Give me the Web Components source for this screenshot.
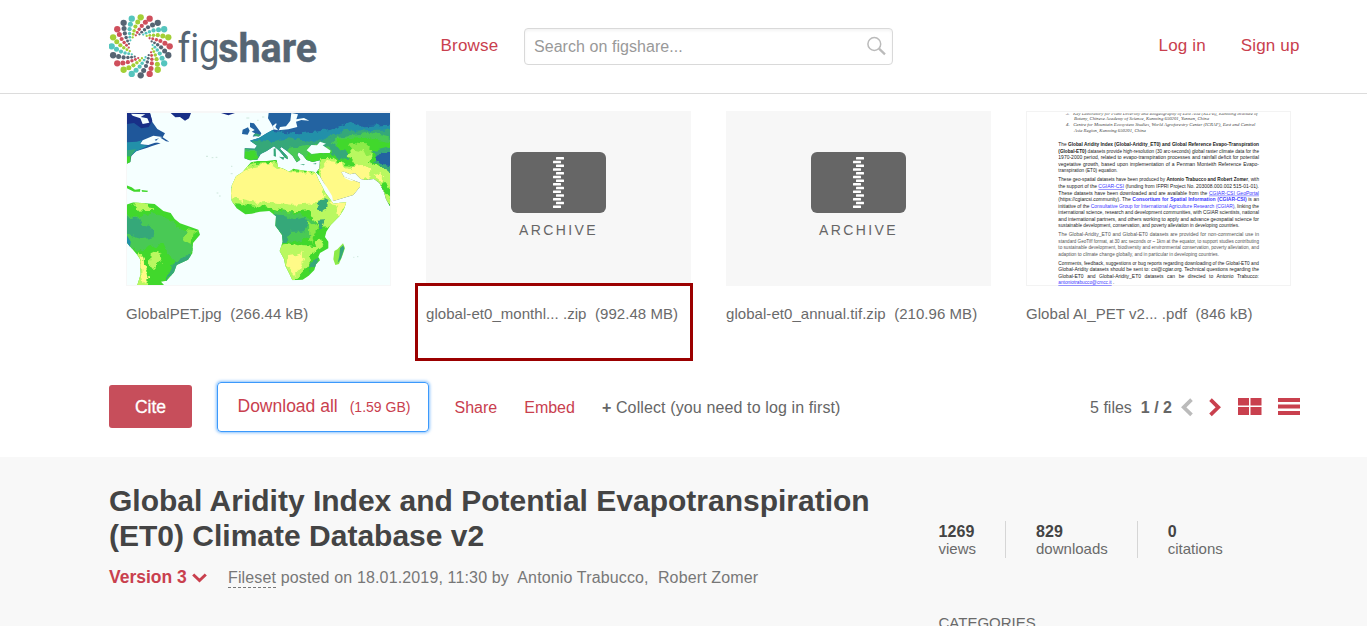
<!DOCTYPE html>
<html lang="en">
<head>
<meta charset="utf-8">
<title>Global Aridity Index - figshare</title>
<style>
body{margin:0;background:#fff;font-family:"Liberation Sans",Arial,sans-serif;color:#6a6a6a;height:626px;overflow:hidden}
</style>
</head>
<body>
<fs-page></fs-page>
<script>
const define = (name, html, after) => {
  const t = document.createElement('template');
  t.innerHTML = html;
  customElements.define(name, class extends HTMLElement {
    constructor() {
      super();
      this.attachShadow({mode: 'open'}).append(t.content.cloneNode(true));
    }
    connectedCallback() { if (after) after(this, this.shadowRoot); }
  });
};

/* Logo: twenty spiral arms of shrinking dots around a hollow centre */
define('fs-logo', `<style>:host{display:block;width:210px;height:66px}svg{display:block}text{font-variant-ligatures:none}</style>
<svg width="210" height="66" viewBox="0 0 210 66"><g id="dots"></g>
<text x="68.5" y="48.7" font-family="Roboto,sans-serif" font-size="41.5" font-weight="400" fill="#566573" textLength="42" lengthAdjust="spacingAndGlyphs">fig</text>
<text x="109.2" y="48.7" font-family="Roboto,sans-serif" font-size="41.5" font-weight="700" fill="#566573" stroke="#566573" stroke-width=".4" textLength="99" lengthAdjust="spacingAndGlyphs">share</text></svg>`,
(h, r) => {
  const c = ['#a3cf36','#cf4f5c','#566573','#55c5be'];
  const radii = [29,24.4,20.4,17,14.2,12], size = [3.15,2.5,2.1,1.75,1.45,1.15], twist = [0,7,15,23,32,42];
  let s = '';
  for (let i = 0; i < 20; i++) radii.forEach((q, k) => {
    const a = (i * 18 - 90 - twist[k]) * Math.PI / 180;
    s += `<circle cx="${(31.7 + q*Math.cos(a)).toFixed(2)}" cy="${(33.3 + q*Math.sin(a)).toFixed(2)}" r="${size[k]}" fill="${c[i%4]}"/>`;
  });
  r.getElementById('dots').innerHTML = s;
});

define('fs-search', `<style>:host{display:flex;box-sizing:border-box;width:369px;height:37px;border:1px solid #d9d9d9;border-radius:4px;align-items:center;justify-content:space-between;padding:0 5px 0 9px;box-shadow:inset 0 2px 3px #0000000c;font-size:16px;letter-spacing:.05px;color:#999}svg{margin-top:-2px}</style>
<slot></slot><svg width="21" height="20" viewBox="0 0 21 20" fill="none" stroke="#bbb"><circle cx="8.3" cy="8" r="6.4" stroke-width="1.5"/><path d="M13 12.7l6 5.6" stroke-width="2.3"/></svg>`);

define('fs-header', `<style>:host{display:flex;box-sizing:border-box;height:94px;border-bottom:1px solid #dcdcdc;padding:0 67px 0 109px;align-items:flex-start;font-size:17px;color:#c9404e}
fs-logo{margin-top:13px}.b{margin:36px 0 0 121.5px;width:58px;letter-spacing:.2px;line-height:19px}fs-search{margin:28px 0 0 25.5px}.r{margin:36px .5px 0 auto;display:flex;gap:35px;line-height:19px;letter-spacing:.15px}</style>
<fs-logo></fs-logo><span class="b">Browse</span><fs-search>Search on figshare...</fs-search><span class="r"><span>Log in</span><span>Sign up</span></span>`);

define('fs-file', `<style>:host{display:block;width:265px}.t{height:175px;display:flex;background:#f7f7f7}.n{margin-top:19px;line-height:18px;font-size:15px;white-space:pre;letter-spacing:.05px}</style>
<div class="t"><slot name="thumb"></slot></div><div class="n"><slot></slot></div>`);

define('fs-archive', `<style>:host{display:flex;flex-direction:column;align-items:center;width:265px;padding-top:41px;font-size:14px}svg{display:block}span{letter-spacing:2.4px;margin:8.500px 0 0 0;line-height:17px;color:#666}</style>
<svg width="95" height="61" viewBox="0 0 95 61"><rect width="95" height="61" rx="6" fill="#666"/><g id="z" fill="#fff"></g></svg><span>ARCHIVE</span>`,
(h, r) => {
  let s = '';
  for (let i = 0; i < 14; i++) s += `<rect x="${i%2 ? 42 : 45}" y="${(5 + i*3.73).toFixed(2)}" width="8" height="2.5" rx=".5"/>`;
  r.getElementById('z').innerHTML = s;
});

/* Evapotranspiration map: colour bands clipped to the coastlines */
define('fs-map', `<style>:host{display:block;padding:2px 1px 1px}svg{display:block}</style>
<svg width="263" height="172" viewBox="21 24 789 516" preserveAspectRatio="none">
<defs>
<clipPath id="af"><path d="M393 172L412 168L440 168L470 164L474 186L492 192L507 200L520 191L545 196L582 200L588 206L596 225L606 243L615 262L630 282L640 296L660 293L679 292L672 312L658 334L632 360L619 380L615 396L625 410L625 430L600 444L595 456L600 466L588 478L583 495L566 512L548 524L517 526L510 510L496 482L492 462L479 438L488 410L486 390L466 362L468 334L448 318L420 320L395 326L376 328L350 310L335 288L333 265L335 242L348 214L367 202Z"/></clipPath>
<clipPath id="eu"><path d="M446 24L810 24L810 304L798 283L792 262L778 234L762 222L735 225L722 222L705 205L690 208L672 200L664 201L672 215L690 222L700 226L720 233L720 245L700 270L640 288L628 270L612 235L598 211L588 204L598 190L600 166L578 171L560 165L548 150L536 142L532 150L541 164L530 172L518 153L502 139L484 126L480 131L502 154L504 163L495 158L478 137L462 124L440 138L422 147L412 164L390 166L373 160L374 130L404 131L411 122L390 107L418 98L440 85L462 73L456 60L444 40Z"/></clipPath>
<clipPath id="sa"><path d="M20 299L40 292L65 294L104 297L130 318L152 324L164 342L180 355L212 366L235 374L240 389L219 414L217 445L204 464L170 480L162 502L140 527L123 530L132 540L52 540L62 508L60 462L52 450L20 412Z"/></clipPath>
<filter id="rough" x="-5%" y="-5%" width="110%" height="110%" color-interpolation-filters="sRGB"><feTurbulence type="fractalNoise" baseFrequency=".05" numOctaves="3" seed="4" result="n"/><feDisplacementMap in="SourceGraphic" in2="n" scale="22" xChannelSelector="R" yChannelSelector="G"/></filter>
</defs>
<rect x="20" y="20" width="800" height="530" fill="#f5ffff"/>
<path fill="#1f579a" d="M20 24H90L97 51L112 72L135 85L128 97L148 110L138 109L119 97L104 112L122 115L94 124L82 128L48 139L34 153L31 171L20 176Z"/>
<path fill="#182f87" d="M20 24H90L97 48L86 66L64 70L42 54L20 57ZM152 24H213L207 40L195 47L180 36L166 37ZM303 24H345L325 31Z"/>
<path fill="#f5ffff" d="M33 26L76 28L62 36L82 40L88 53L68 57L61 40L38 32ZM68 106L100 92L127 96L104 104L112 111L85 120L60 118Z"/>
<path fill="#2290a9" d="M20 112L50 110L66 106L60 118L84 122L50 138L34 151L20 154Z"/><path fill="#35a879" d="M20 136L48 133L34 152L20 158Z"/><path fill="#41d82c" d="M20 155L32 153L31 171L20 177Z"/>
<g clip-path="url(#eu)"><rect x="360" y="20" width="460" height="300" fill="#2363a1"/><g filter="url(#rough)">
<path fill="#2290a9" d="M360 100L450 77L540 85L630 75L690 51L730 64L840 57V330H360Z"/>
<path fill="#35a879" d="M360 125L410 105L450 109L510 100L590 110L670 78L840 72V330H360Z"/>
<path fill="#49c955" d="M360 132L410 135L415 170H360ZM500 130L560 120L630 128L650 95L750 83L840 105V330H510Z"/>
<path fill="#41d82c" d="M364 142L406 137L412 166H364ZM556 148L626 141L648 126L652 104L740 98L840 118V330H540Z"/>
<path fill="#35a879" d="M632 110L654 132L690 142L686 165L653 161L632 141Z"/>
<path fill="#b9f860" d="M600 160L640 158L675 181L708 184L686 150L708 122L737 125L756 150L747 170L782 190L840 198V290L680 300H580Z"/>
<path fill="#8ceb48" d="M684 118L704 112L740 118L760 140L748 152L726 140L700 134Z"/>
<path fill="#fffa87" d="M606 190L622 169L653 170L678 190L731 214L734 290H590ZM690 182L725 180L750 190L752 218L710 222L695 202ZM762 207L786 202L785 232L770 224Z"/>
<path fill="#35a879" d="M752 140L840 120V206L786 190L760 172L778 160Z"/>
<path fill="#2363a1" d="M772 148L840 140V190L794 180L772 165Z"/>
<path fill="#41d82c" d="M791 225L830 270V306L788 260Z"/></g>
<path fill="#f5ffff" d="M560 136L574 120L591 121L600 110L618 116L608 121L632 137L629 144L600 144L575 147ZM460 73L475 76L505 73L532 66L528 50L544 45L568 47L552 39L529 43L534 28L514 24L511 47L498 64L480 66L468 55L454 66ZM664 201L674 200L689 217L706 224L694 228L675 220Z"/></g>
<path fill="#f5ffff" d="M584 206L590 203L604 224L620 246L636 272L640 290L632 280L614 258L600 236Z"/>
<path fill="#2363a1" d="M390 53L402 55L412 68L424 85L421 91L398 95L405 85L395 80L404 75L390 66ZM368 74L384 67L389 77L383 89L366 87ZM471 55L482 61L476 77L466 66Z"/><path fill="#35a879" d="M398 91L408 85L423 90L416 95ZM461 131L467 130L468 155L461 153ZM477 155L493 157L490 165ZM540 178L555 178L551 181ZM578 177L589 174L588 178Z"/>
<g clip-path="url(#af)"><rect x="320" y="150" width="370" height="390" fill="#41d82c"/><g filter="url(#rough)">
<path fill="#b9f860" d="M375 185L400 178L475 172L510 195L600 203L700 300L625 373L602 350L595 365L582 349L570 316L540 318L500 319L430 305L330 293V230Z"/>
<path fill="#fffa87" d="M385 190L450 174L472 190L520 200L595 205L610 250L614 276L592 294L560 296L515 299L450 290L402 293L330 276V210L366 200ZM632 282L690 286L678 308L650 335L645 317L655 302L632 298Z"/>
<path fill="#49c955" d="M463 316L530 324L582 345L588 374L574 391L545 405L505 410L478 385L460 360Z"/>
<path fill="#35a879" d="M464 327L498 332L512 344L556 338L568 354L547 380L510 380L498 410L486 412L490 390L462 366Z"/>
<path fill="#35a879" d="M599 292L625 279L622 308L602 321L587 305ZM595 347L616 346L608 371L593 374Z"/>
<path fill="#8ceb48" d="M567 351L592 365L578 395L582 419L568 408Z"/>
<path fill="#b9f860" d="M470 425L495 414L550 423L582 426L601 399L612 416L576 447L563 485L545 507L520 530L480 492Z"/>
<path fill="#fffa87" d="M510 450L546 443L555 460L536 494L522 510L497 483Z"/><path fill="#35a879" d="M586 462L600 458L590 481L570 493L564 503L570 480Z"/></g></g>
<g clip-path="url(#sa)"><rect x="20" y="290" width="230" height="260" fill="#41d82c"/><g filter="url(#rough)">
<path fill="#49c955" d="M0 327L60 336L105 324L150 345L178 366L208 379L195 403L220 424L205 465L172 478L145 450L130 416L88 424L52 440L0 410Z"/>
<path fill="#35a879" d="M0 334L52 340L75 363L108 372L104 396L66 403L0 383ZM160 477L205 449L222 460L170 504L135 528Z"/>
<path fill="#b9f860" d="M35 292L83 296L100 314L58 320ZM92 445L113 435L127 460L100 492L89 485ZM52 440L66 450L80 500L82 550H54ZM61 306L75 305L77 317L59 317Z"/>
<path fill="#8ceb48" d="M205 370L235 374L218 388L211 418L189 406Z"/>
<path fill="#fffa87" d="M60 456L70 460L75 495L85 523L72 540L65 511Z"/></g></g>
<path fill="#2290a9" d="M20 390L32 410L30 425L20 412Z"/>
<path fill="#41d82c" d="M20 241L35 247L45 254L61 252L60 260L42 260L20 249ZM65 255L84 257L82 261L66 260Z"/>
<path fill="#8ceb48" d="M643 438L652 433L669 415L675 429L668 450L657 477L646 480L640 463Z"/><path fill="#35a879" d="M660 429L670 421L673 431L663 461L653 474L658 452Z"/>
<path stroke="#b8d9c8" stroke-width="2" d="M258 154h6m11 4h5m7-1h5M290 264h5m2 9h5M379 39h9m38-3h7m-22 10h5M700 457h3m8-2h4M333 184h4m-5 22h6"/>
</svg>`);

/* First page of the PDF: miniature lines, justified by widening the word gaps */
define('fs-doc', `<style>:host{display:block}svg{display:block}</style>
<svg width="265" height="175" viewBox="18 17 795 525" font-family="Liberation Sans,Arial,sans-serif" font-size="15" fill="#222"><rect x="19.5" y="18.5" width="792" height="522" fill="#fff" stroke="#f3f3f3" stroke-width="3"/><svg x="21" y="24" width="789" height="518" viewBox="21 24 789 518"><g id="l"></g></svg></svg>`,
(h, r) => {
  const B = s => `<tspan font-weight="700">${s}</tspan>`, L = s => `<tspan fill="#3a35ff" text-decoration="underline">${s}</tspan>`;
  const I = (x, y, w, s) => [x, y, w, s, 'font-family="Liberation Serif,serif" font-style="italic" fill="#444"'];
  const G = 'fill="#555"';
  const rows = [
    I(138,29,575,'3.&#160;&#160; Key Laboratory for Plant Diversity and Biogeography of East Asia (KLPB), Kunming Institute of'),
    I(162,45,405,'Botany, Chinese Academy of Science, Kunming 650201, Yunnan, China'),
    I(138,62,568,'4.&#160;&#160; Centre for Mountain Ecosystem Studies, World Agroforestry Center (ICRAF), East and Central'),
    I(162,79,216,'Asia Region, Kunming 650201, China'),
    [115,123,602,'The '+B('Global Aridity Index (Global-Aridity_ET0) and Global Reference Evapo-Transpiration')],
    [115,142,602,B('(Global-ET0)')+' datasets provide high-resolution (30 arc-seconds) global raster climate data for the'],
    [115,162,602,'1970-2000 period, related to evapo-transpiration processes and rainfall deficit for potential'],
    [115,182,602,'vegetative growth, based upon implementation of a Penman Monteith Reference Evapo-'],
    [115,201,178,'transpiration (ET0) equation.'],
    [115,228,602,'These geo-spatial datasets have been produced by '+B('Antonio Trabucco and Robert Zomer')+', with'],
    [115,248,602,'the support of the '+L('CGIAR-CSI')+' (funding from IFPRI Project No. 203008.000.002 515-01-01).'],
    [115,268,602,'These datasets have been downloaded and are available from the '+L('CGIAR-CSI GeoPortal')],
    [115,288,602,'(https://cgiarcsi.community). The <tspan fill="#3a35ff" font-weight="700">Consortium for Spatial Information (CGIAR-CSI)</tspan> is an'],
    [115,307,602,'initiative of the <tspan fill="#3a35ff">Consultative Group for International Agriculture Research (CGIAR)</tspan>, linking the'],
    [115,327,602,'international science, research and development communities, with CGIAR scientists, national'],
    [115,346,602,'and international partners, and others working to apply and advance geospatial science for'],
    [115,366,543,'sustainable development, conservation, and poverty alleviation in developing countries.'],
    [115,393,602,'The Global-Aridity_ET0 and Global-ET0 datasets are provided for non-commercial use in',G],
    [115,412,602,'standard GeoTiff format, at 30 arc seconds or ~ 1km at the equator, to support studies contributing',G],
    [115,432,602,'to sustainable development, biodiversity and environmental conservation, poverty alleviation, and',G],
    [115,451,482,'adaption to climate change globally, and in particular in developing countries.',G],
    [115,479,602,'Comments, feedback, suggestions or bug reports regarding downloading of the Global-ET0 and'],
    [115,498,602,'Global-Aridity datasets should be sent to: csi@cgiar.org. Technical questions regarding the'],
    [115,517,602,'Global-ET0 and Global-Aridity_ET0 datasets can be directed to Antonio Trabucco:'],
    [115,537,168,L('antoniotrabucco@cmcc.it')+' .']
  ];
  const g = r.getElementById('l');
  g.innerHTML = rows.map(([x,y,w,s,a]) => `<text x="${x}" y="${y}" ${a||''}>${s}</text>`).join('');
  [...g.children].forEach((t, i) => {
    const w = rows[i][2], len = t.getComputedTextLength(), gaps = t.textContent.split(' ').length - 1;
    if (len && len < w && gaps > 2) t.style.wordSpacing = (w - len) / gaps + 'px';
    else { t.setAttribute('textLength', w); t.setAttribute('lengthAdjust', 'spacingAndGlyphs'); }
  });
});

define('fs-files', `<style>:host{display:flex;gap:35px;padding:17px 0 0 126px;height:254px;position:relative}.mark{position:absolute;box-sizing:border-box;left:415px;top:189px;width:278px;height:78px;border:3px solid #9b0000}</style>
<fs-file><fs-map slot="thumb"></fs-map>GlobalPET.jpg&#160; (266.44 kB)</fs-file>
<fs-file><fs-archive slot="thumb"></fs-archive>global-et0_monthl... .zip&#160; (992.48 MB)</fs-file>
<fs-file><fs-archive slot="thumb"></fs-archive>global-et0_annual.tif.zip&#160; (210.96 MB)</fs-file>
<fs-file><fs-doc slot="thumb"></fs-doc>Global AI_PET v2... .pdf&#160; (846 kB)</fs-file>
<div class="mark"></div>`);

define('fs-actions', `<style>:host{display:flex;box-sizing:border-box;height:92px;padding:16px 66px 0 109px;font-size:16px;line-height:18px;color:#c9404e;align-items:flex-start}
.c{width:83px;height:43px;margin-top:4px;border-radius:3px;background:#c74e5b;color:#fff;display:flex;align-items:center;justify-content:center;font-size:17.5px;-webkit-text-stroke:.3px #fff}
.d{box-sizing:border-box;width:212px;height:50px;margin:1px 0 0 25px;border:1.5px solid #3b99fc;border-radius:4px;box-shadow:0 0 3px 1px #3b99fc99;display:flex;align-items:baseline;padding:13px 0 0 19.5px;font-size:17.5px;line-height:20px}
.d small{font-size:14px;margin-left:12px}.s{margin:18px 0 0 25.5px}.e{margin:18px 0 0 27px}.k{margin:18px 0 0 27px;color:#666;letter-spacing:.12px}.k b{font-size:16px}
.p{margin:18px 0 0 auto;display:flex;color:#666}.p b{margin-left:9px}svg{margin-top:16px;display:block}</style>
<div class="c">Cite</div><div class="d">Download all<small>(1.59 GB)</small></div><span class="s">Share</span><span class="e">Embed</span><span class="k"><b>+</b> Collect (you need to log in first)</span>
<span class="p"><span>5 files</span><b>1 / 2</b></span>
<svg style="margin-left:9px" width="120" height="20" viewBox="0 0 120 20"><g fill="none" stroke-width="3.7"><path stroke="#bbb" d="M10.500 2.7L2.7 10.3L10.500 17.8"/><path stroke="#c9404e" d="M29.500 2.7L37.300 10.3L29.500 17.8"/></g><g fill="#c9404e"><path d="M57 1h11v7.5h-11zM69.5 1h11v7.5h-11zM57 10h11v8h-11zM69.5 10h11v8h-11zM97 1h22v4h-22zM97 7.500h22v4h-22zM97 14h22v4h-22z"/></g></svg>`);

define('fs-stat', `<style>:host{display:block;font-size:15px;line-height:17px}b{display:block;font-size:16px;line-height:17px;color:#444;letter-spacing:.1px}</style><b><slot name="n"></slot></b><slot></slot>`);

define('fs-details', `<style>:host{display:grid;grid-template-columns:829.5px 1fr;box-sizing:border-box;height:169px;background:#f8f8f8;padding:26px 67px 0 109px;overflow:hidden}
h1{margin:0;font-size:30px;line-height:35px;color:#444;white-space:nowrap}.m{display:flex;align-items:baseline;margin-top:14px;font-size:16px;line-height:20px;color:#777;white-space:pre;letter-spacing:.145px}
.v{font-size:17.5px;font-weight:700;color:#c9404e;width:119px;letter-spacing:0}.f{border-bottom:1px dashed #777;line-height:19px}
.st{display:flex;margin-top:38px;height:37px}.x{border-left:1px solid #d6d6d6;margin:0 30px 0 29px}fs-stat{margin-top:2px}.cat{margin-top:55.500px;font-size:15px;line-height:18px}</style>
<div><h1>Global Aridity Index and Potential Evapotranspiration<br>(ET0) Climate Database v2</h1>
<div class="m"><span class="v">Version 3 <svg width="15" height="10" viewBox="0 0 15 10" fill="none" stroke="#c9404e" stroke-width="3"><path d="M1.200 1.500L7.500 7.500L13.800 1.500"/></svg></span><span class="f">Fileset</span><span> posted on 18.01.2019, 11:30 by&#160; Antonio Trabucco,&#160; Robert Zomer</span></div></div>
<div><div class="st"><fs-stat><span slot="n">1269</span>views</fs-stat><span class="x"></span><fs-stat><span slot="n">829</span>downloads</fs-stat><span class="x"></span><fs-stat><span slot="n">0</span>citations</fs-stat></div><div class="cat">CATEGORIES</div></div>`);

define('fs-page', `<style>:host{display:block}</style><fs-header></fs-header><fs-files></fs-files><fs-actions></fs-actions><fs-details></fs-details>`);
</script>
</body>
</html>
